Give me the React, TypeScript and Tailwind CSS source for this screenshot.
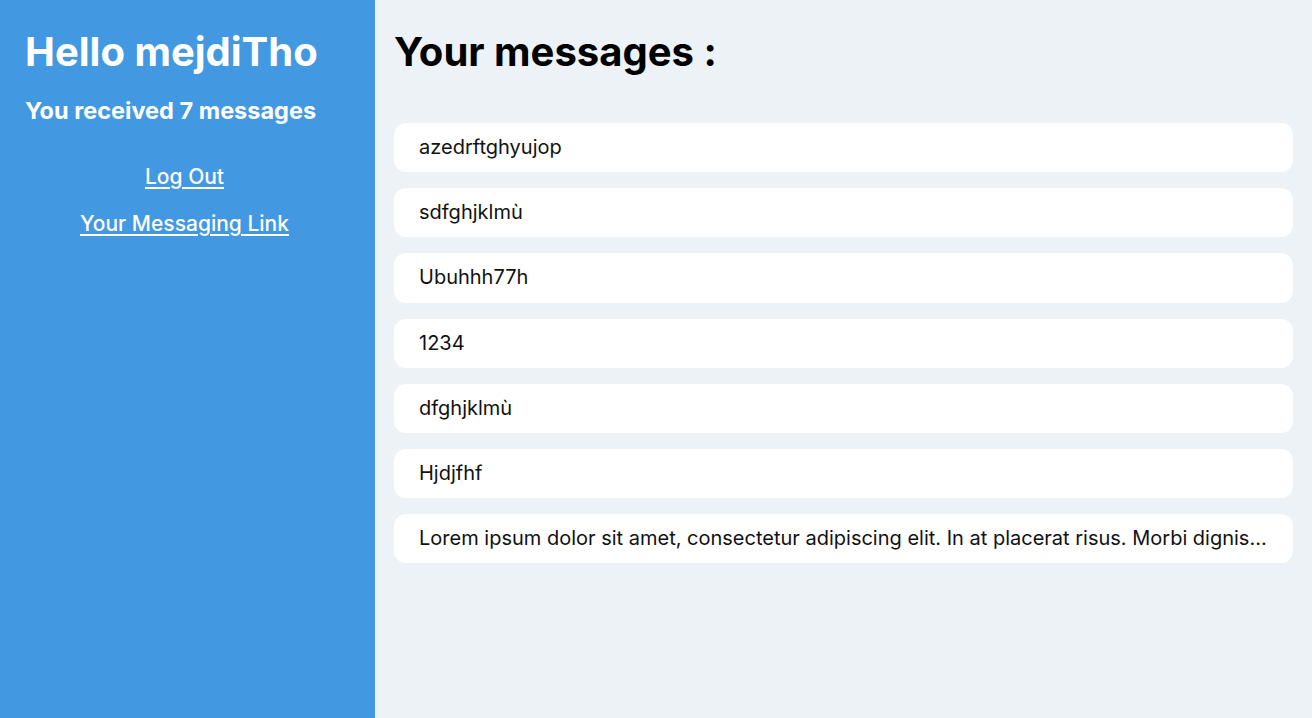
const messages = [
  "azedrftghyujop",
  "sdfghjklmù",
  "Ubuhhh77h",
  "1234",
  "dfghjklmù",
  "Hjdjfhf",
  "Lorem ipsum dolor sit amet, consectetur adipiscing elit. In at placerat risus. Morbi dignissim, lorem ut pulvinar posuere, nisl sapien tincidunt ligula, eu sodales velit dolor nec lorem.",
];

export default function App() {
  return (
    <div className="flex h-[718px] w-full font-['Inter',sans-serif] bg-[#edf2f7]">
      <aside className="w-[375px] shrink-0 bg-[#4299e1] text-white pl-[25px] pr-[31px] pt-[26px]">
        <h1 className="text-[40px] leading-[52px] font-bold">Hello mejdiTho</h1>
        <h2 className="mt-[18px] text-[23.5px] leading-[30px] font-bold">You received 7 messages</h2>
        <nav className="mt-[36px] flex flex-col items-center gap-[17px]">
          <a href="#" className="text-[21px] leading-[30px] font-medium underline underline-offset-[3px]">Log Out</a>
          <a href="#" className="text-[21px] leading-[30px] font-medium underline underline-offset-[3px]">Your Messaging Link</a>
        </nav>
      </aside>
      <main className="flex-1 min-w-0 pl-[19px] pr-[19px] pt-[26px]">
        <h1 className="text-[40px] leading-[52px] font-bold text-black">Your messages :</h1>
        <ul className="mt-[45px] flex flex-col gap-[16px]">
          {messages.map((m, i) => (
            <li key={i} className="bg-white rounded-[12px] px-[25px] py-[12px] text-[20px] leading-[25.2px] text-[#111] truncate">
              {m}
            </li>
          ))}
        </ul>
      </main>
    </div>
  );
}
